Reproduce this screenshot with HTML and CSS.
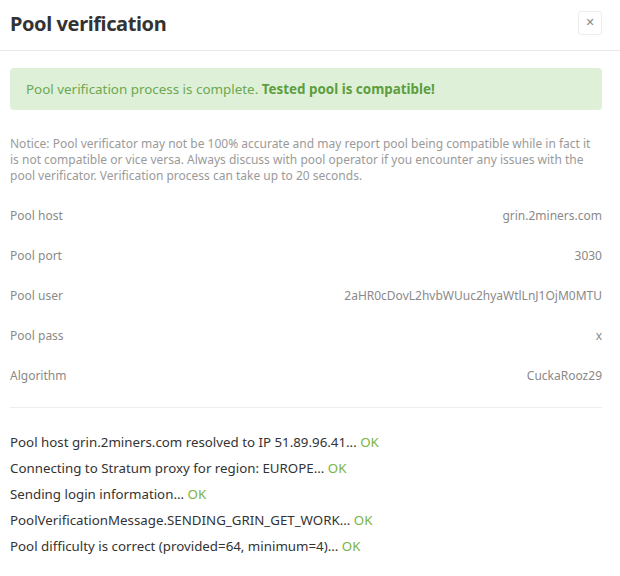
FILE: index.html
```html
<!DOCTYPE html>
<html>
<head>
<meta charset="utf-8">
<link rel="stylesheet" href="styles.css">
</head>
<body>
<div class="modal">
  <div class="header">
    <h1 class="title">Pool verification</h1>
    <button class="close">&#x2715;</button>
  </div>
  <div class="content">
    <div class="alert">Pool verification process is complete. <b>Tested pool is compatible!</b></div>
    <p class="notice">Notice: Pool verificator may not be 100% accurate and may report pool being compatible while in fact it is not compatible or vice versa. Always discuss with pool operator if you encounter any issues with the pool verificator. Verification process can take up to 20 seconds.</p>
    <div class="rows">
      <div class="row"><span class="label">Pool host</span><span class="value">grin.2miners.com</span></div>
      <div class="row"><span class="label">Pool port</span><span class="value">3030</span></div>
      <div class="row"><span class="label">Pool user</span><span class="value">2aHR0cDovL2hvbWUuc2hyaWtlLnJ1OjM0MTU</span></div>
      <div class="row"><span class="label">Pool pass</span><span class="value">x</span></div>
      <div class="row"><span class="label">Algorithm</span><span class="value">CuckaRooz29</span></div>
    </div>
    <div class="log">
      <div class="line">Pool host grin.2miners.com resolved to IP 51.89.96.41... <span class="ok">OK</span></div>
      <div class="line">Connecting to Stratum proxy for region: EUROPE... <span class="ok">OK</span></div>
      <div class="line">Sending login information... <span class="ok">OK</span></div>
      <div class="line">PoolVerificationMessage.SENDING_GRIN_GET_WORK... <span class="ok">OK</span></div>
      <div class="line">Pool difficulty is correct (provided=64, minimum=4)... <span class="ok">OK</span></div>
    </div>
  </div>
</div>
</body>
</html>
```

FILE: styles.css
```css
html, body {
  margin: 0;
  padding: 0;
  background: #fff;
}
body {
  font-family: "Noto Sans", "Open Sans", sans-serif;
  color: #333;
}
.modal {
  width: 620px;
}
.header {
  height: 51px;
  box-sizing: border-box;
  border-bottom: 1px solid #e8e8e8;
  display: flex;
  align-items: center;
  justify-content: space-between;
  padding: 0 18px 4px 10px;
}
.title {
  margin: 0;
  font-size: 20px;
  font-weight: 700;
  color: #333;
  letter-spacing: -0.4px;
}
.close {
  width: 24px;
  height: 24px;
  padding: 0;
  border: 1px solid #ececec;
  border-radius: 3px;
  background: #fff;
  color: #888;
  font-size: 11px;
  font-weight: 700;
  line-height: 22px;
  text-align: center;
  font-family: "DejaVu Sans", sans-serif;
}
.content {
  padding: 17px 18px 0 10px;
}
.alert {
  height: 42px;
  box-sizing: border-box;
  background: #dff0d8;
  border-radius: 4px;
  padding: 0 16px;
  display: flex;
  align-items: center;
  font-size: 13.4px;
  color: #6ba850;
  white-space: pre;
}
.alert b {
  color: #5c9e3e;
  font-weight: 700;
}
.notice {
  margin: 26px 0 11px;
  font-size: 12px;
  line-height: 16px;
  color: #9a9a9a;
}
.rows {
  border-bottom: 1px solid #eee;
  padding-bottom: 12px;
}
.row {
  height: 40px;
  display: flex;
  align-items: center;
  justify-content: space-between;
  font-size: 12px;
  color: #8a8a8a;
}
.log {
  padding-top: 21px;
}
.line {
  height: 26px;
  line-height: 26px;
  font-size: 13.3px;
  color: #333;
}
.ok {
  color: #7cb342;
}
```
